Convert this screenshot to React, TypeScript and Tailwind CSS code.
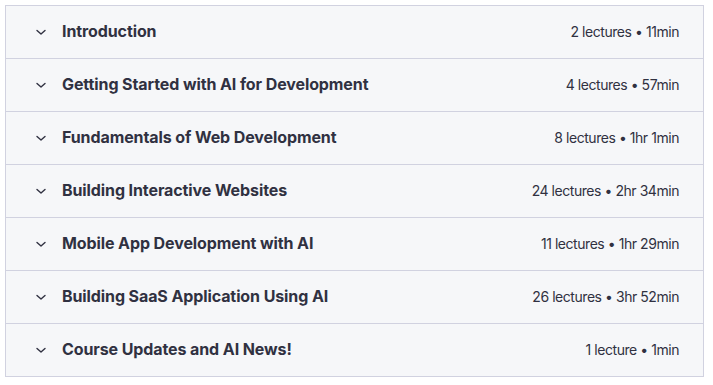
import React from "react"

type Section = {
    title: string
    meta: string
}

const sections: Section[] = [
    { title: "Introduction", meta: "2 lectures • 11min" },
    { title: "Getting Started with AI for Development", meta: "4 lectures • 57min" },
    { title: "Fundamentals of Web Development", meta: "8 lectures • 1hr 1min" },
    { title: "Building Interactive Websites", meta: "24 lectures • 2hr 34min" },
    { title: "Mobile App Development with AI", meta: "11 lectures • 1hr 29min" },
    { title: "Building SaaS Application Using AI", meta: "26 lectures • 3hr 52min" },
    { title: "Course Updates and AI News!", meta: "1 lecture • 1min" },
]

function Chevron() {
    return (
        <svg width="12" height="12" viewBox="0 0 12 12" fill="none" className="shrink-0">
            <path d="M2 4.5 L6 8 L10 4.5" stroke="#303141" strokeWidth="1.4" strokeLinecap="round" strokeLinejoin="round" />
        </svg>
    )
}

export default function App() {
    return (
        <div className="bg-white p-[5px] pr-[9px] font-['Inter',sans-serif] text-[#303141]">
            <div className="border border-[#d1d2e0] bg-[#f6f7f9]">
                {sections.map((s, i) => (
                    <div
                        key={s.title}
                        className={
                            i === 0
                                ? "flex h-[52px] items-center pl-[29px] pr-[24px]"
                                : "flex h-[53px] items-center border-t border-[#d1d2e0] pl-[29px] pr-[24px]"
                        }
                    >
                        <Chevron />
                        <span className="ml-[15px] -mt-[2px] text-[16px] font-bold tracking-[-0.1px]">{s.title}</span>
                        <span className="ml-auto -mt-[2px] text-[14px] tracking-[-0.45px]">{s.meta}</span>
                    </div>
                ))}
            </div>
        </div>
    )
}
